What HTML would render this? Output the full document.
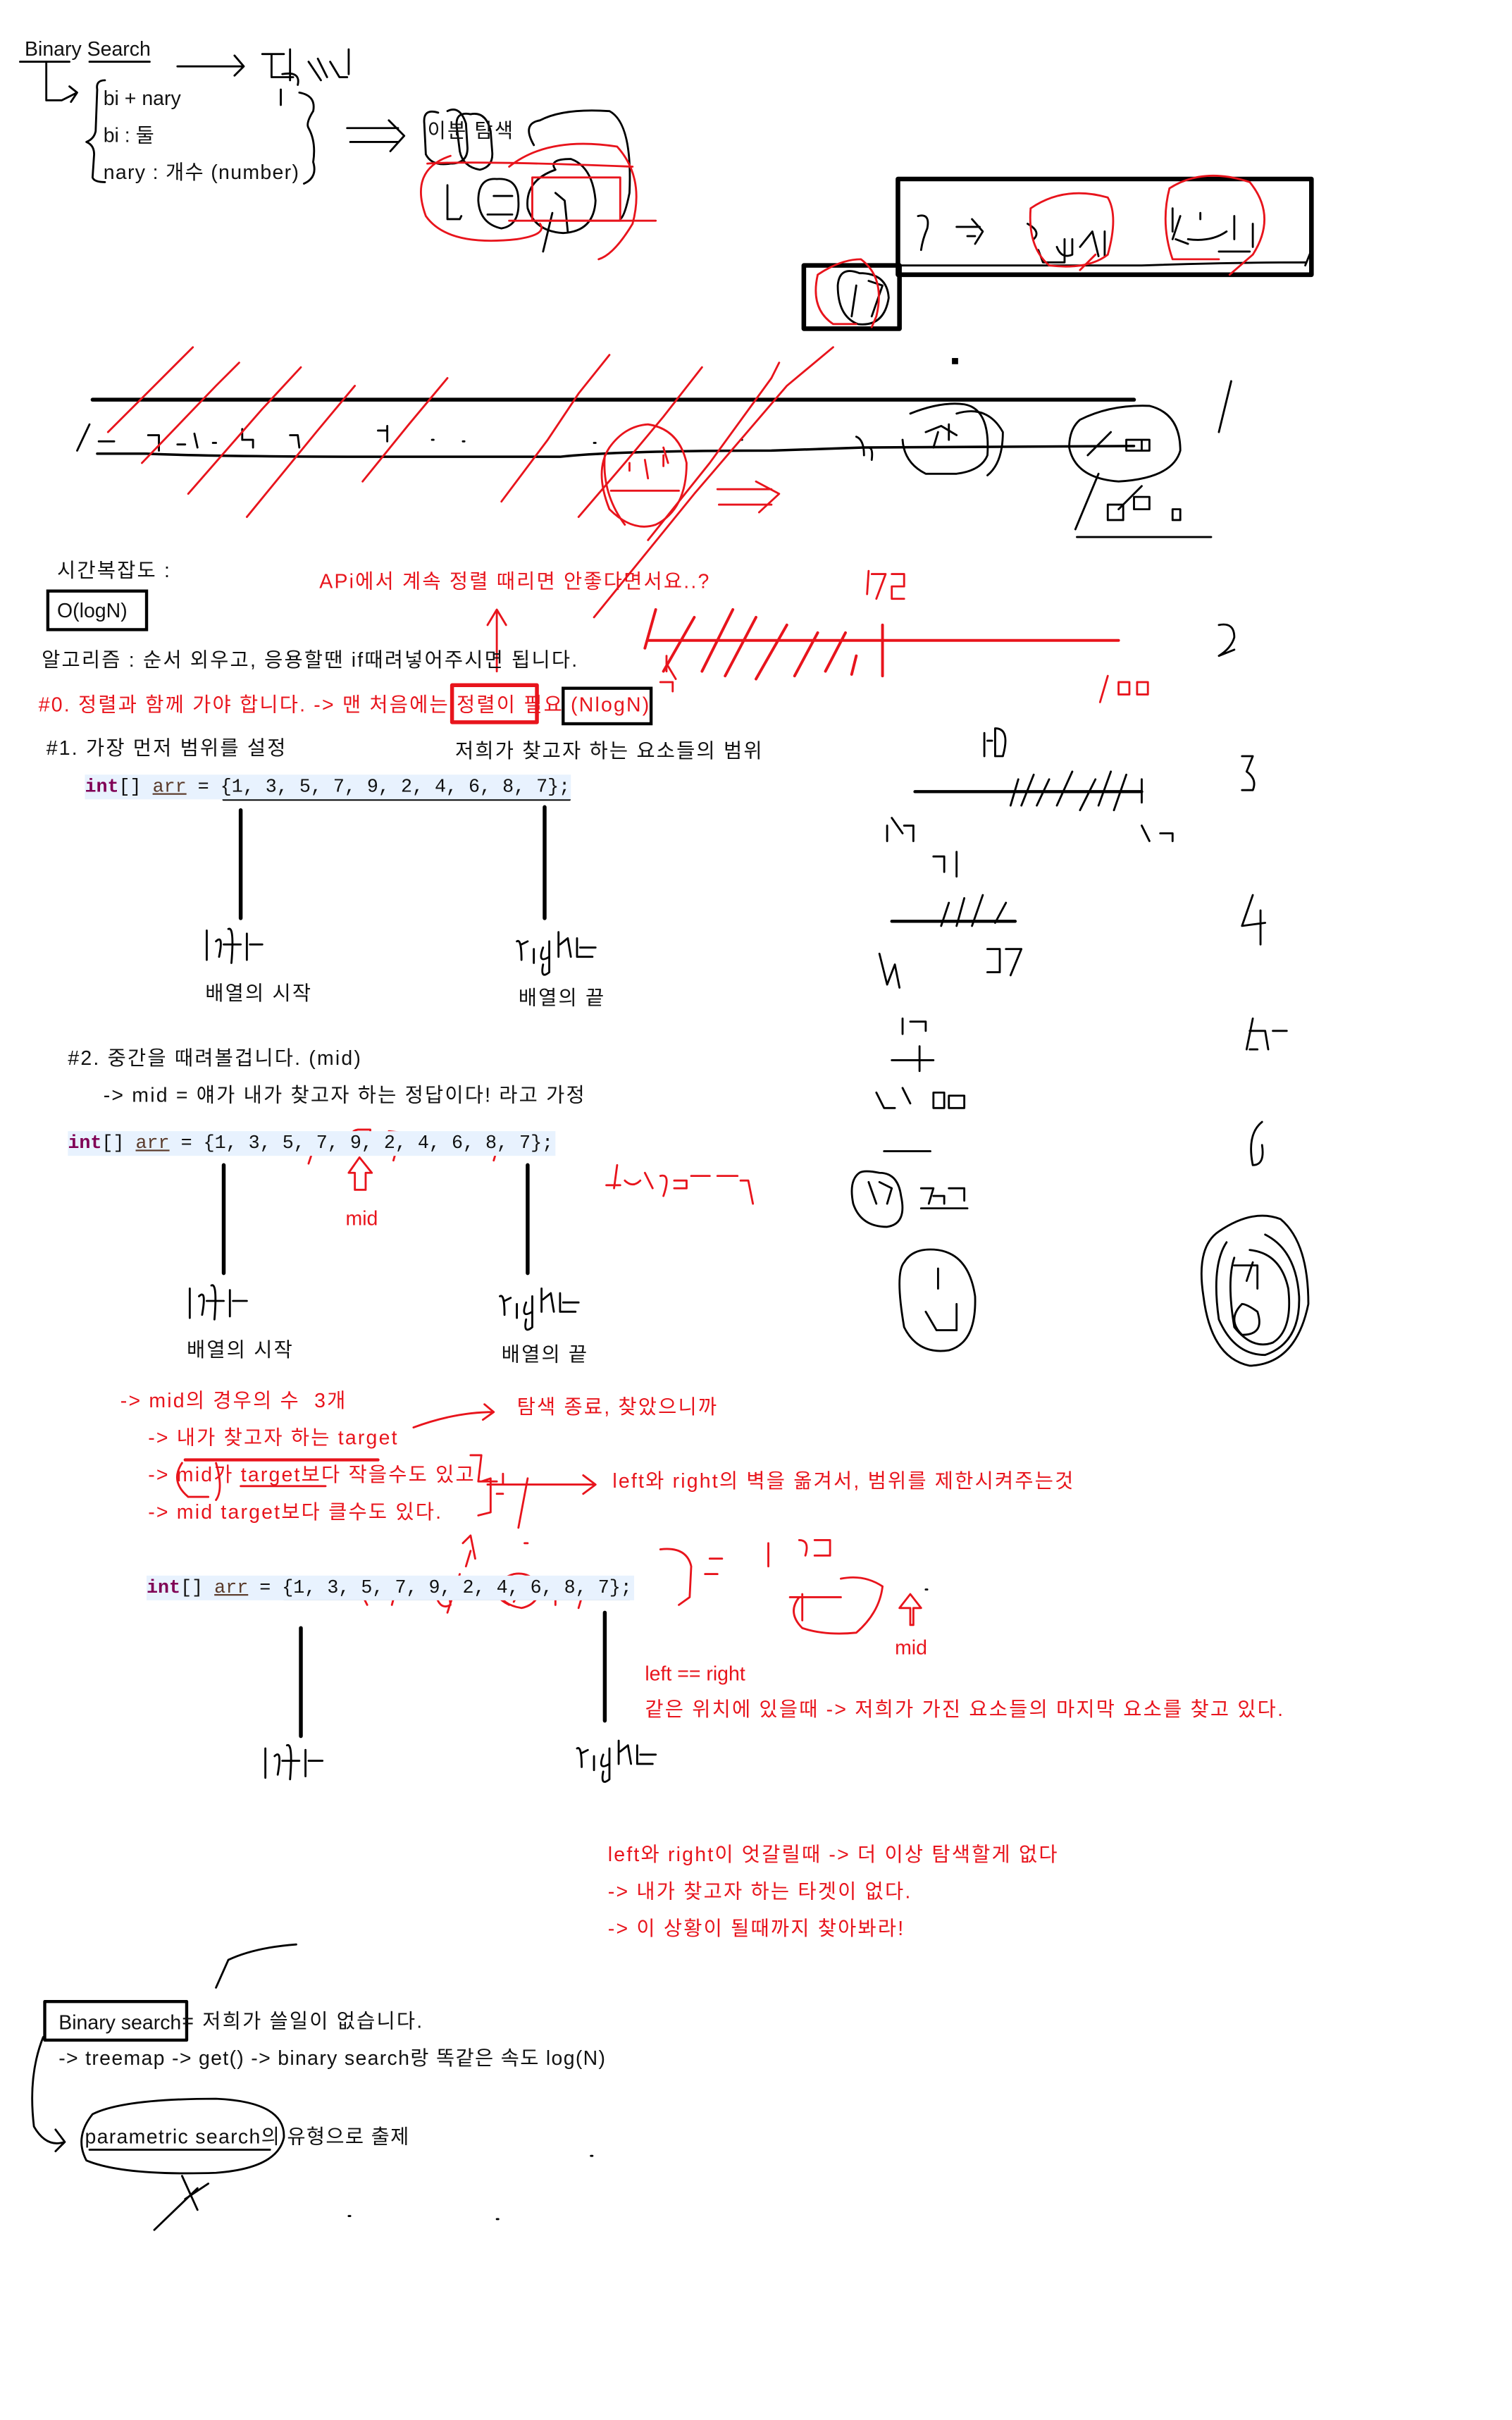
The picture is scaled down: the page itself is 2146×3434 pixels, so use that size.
<!DOCTYPE html>
<html><head><meta charset="utf-8"><style>
html,body{margin:0;padding:0;background:#fff;overflow:hidden;width:2146px;height:3434px}
#w{position:absolute;left:0;top:0;width:980px;height:1568px;transform:scale(2.1898);transform-origin:0 0;font-family:"Liberation Sans","Noto Sans CJK KR",sans-serif;font-size:13px;color:#111}
.t{position:absolute;white-space:nowrap;line-height:16px}
.k{letter-spacing:1px}
.m{letter-spacing:0.6px}
.r{color:#e8141c}
.c{position:absolute;white-space:nowrap;font-family:"Liberation Mono",monospace;font-size:12.2px;line-height:16px;background:#e8f2fe;color:#111}
.c b{color:#7f0055}.c u{color:#5a3a2a}
svg{position:absolute;left:0;top:0}
</style></head><body><div id="w">
<svg width="960" height="1536" viewBox="0 0 960 1536" fill="none" stroke-linecap="round" stroke-linejoin="round">
<g stroke="#000" stroke-width="1.3">
<path d="M13 40H45M58 40H97M30 40V65H40L50 60M45 56L50 60L46 66"/>
<path d="M68 52Q62 52 63 58L62 85Q61 90 56 92Q61 94 61 100L60 115Q61 118 68 118"/>
<path d="M115 43H158M152 36L158 43L152 49"/>
<path d="M170 35H184M176 35V50H190M188 32V52M183 48Q195 46 193 55M182 58V68M200 40L208 52M206 38L212 50M214 40L220 50H225M226 32V48"/>
<path d="M194 60Q205 62 203 72Q198 80 200 83Q205 92 203 105Q206 115 197 119"/>
<path d="M225 83H258M227 92H258M252 78L262 88L253 98"/>
<path d="M284 73Q274 70 275 80L276 100Q280 108 292 106Q303 106 303 96L302 80Q298 68 290 72M305 74Q295 72 296 82L298 98Q300 108 311 110Q320 108 319 98L318 85Q315 72 305 74"/>
<path d="M290 120V142H298L299 140M322 116Q310 115 310 130Q311 145 325 148Q337 146 336 130Q336 115 322 116M360 110Q340 117 342 135Q347 150 365 151Q385 150 386 130Q384 108 370 103Q355 103 360 110M320 127H332M316 139H332M358 138L352 163M360 125L366 130L368 150"/>
<path d="M346 94Q338 80 350 78Q365 70 395 72Q410 80 408 125Q405 140 402 142"/>
<path d="M582 116H850V178H582Z" stroke-width="3"/>
<path d="M521 172H583V213H521Z" stroke-width="3"/>
<path d="M583 172H740Q800 170 846 170M846 172L850 162"/>
<path d="M595 140Q603 138 601 148Q598 155 597 162M620 147H635M627 153H632M630 142L637 150L632 158"/>
<path d="M666 145Q675 150 670 155M673 162L676 170H690V155M685 160Q688 168 695 165V155M700 160L708 150L712 166M716 150V166"/>
<path d="M760 135V150M765 140L760 155M762 155L770 158M778 138V142M770 155Q785 157 795 150M800 140V155M790 163H810M812 145V160"/>
<path d="M557 177Q544 172 543 185Q543 205 556 210Q573 212 576 193Q575 177 557 177M555 185L552 205M563 182L572 185L565 205"/>
<rect x="617" y="232" width="4" height="4" fill="#000" stroke="none"/>
<path d="M60 259H735" stroke-width="2.5"/>
<path d="M63 294H95Q140 296 250 296H363Q400 292 500 292L560 290L735 289" stroke-width="1.6"/>
<path d="M58 275L50 292M64 286H74M96 282H103V292M115 288H120M126 281L128 290M138 287H140M157 278V285H164V290M188 282H193L194 290M245 279H250M251 276V286M280 285H281M300 286H301M385 287H386M480 285H481"/>
<path d="M555 283Q560 285 560 295M563 290Q566 290 565 298M590 268Q610 260 625 262Q642 265 640 295Q636 305 620 307H600Q586 300 585 285M600 280L610 276L620 282M615 275V285M608 280L605 290"/>
<path d="M620 268Q640 262 650 280Q650 300 640 308"/>
<path d="M700 272Q720 262 745 263Q765 268 765 292Q760 310 725 312Q697 310 693 290Q693 278 700 272M705 295L720 280M730 285H745V292H730ZM740 285V292"/>
<path d="M740 315L725 330M712 307L697 343M718 327H728V337H718ZM735 322H745V330H735ZM760 330H765V337H760ZM698 348H785"/>
<path d="M798 247L790 280M790 405Q800 403 800 413Q798 420 790 425L800 421M805 490H812L808 500Q815 505 812 512L805 512M812 580L805 600L820 598M817 590V612M812 660L808 680M810 668H820L822 680M810 680H815M825 668H834M818 727Q808 735 812 755Q820 755 818 742"/>
<path d="M638 475V490M640 480H643M645 472Q655 472 650 490H645Z"/>
<path d="M593 513H740" stroke-width="2"/>
<path d="M660 505L655 522M670 502L662 522M680 505L672 522M695 500L685 522M710 505L700 525M720 500L712 522M730 502L722 525M740 505V520"/>
<path d="M575 535V545M578 530L585 540M586 535H592V545M740 535L745 545M752 540H760V545M605 555H612V565M620 552V568"/>
<path d="M578 597H658" stroke-width="2"/>
<path d="M615 585L610 600M625 582L620 600M637 580L630 600M652 585L645 598M570 618L575 638L580 625L583 640M640 615H648V630H640M652 615H662L655 632"/>
<path d="M585 660V670M590 662H600V668M578 687H605M596 678V694M568 708L573 718H580M585 705L590 715M605 708H612V718H605ZM615 710H625V718H615Z"/>
<path d="M573 746H603M557 760Q550 765 553 780Q558 795 575 795Q588 793 584 775Q582 760 570 760Q560 758 557 760M563 766L568 780M570 766L578 770L575 780M597 770H605L602 780M597 783H627M605 775H612V780M615 770H625V778"/>
<path d="M586 818Q580 825 586 860Q595 878 615 875Q633 870 632 840Q628 813 608 810Q592 808 586 818M608 822V835M600 850L607 862H620V845"/>
<path d="M790 798Q775 808 780 840Q785 880 810 885Q840 884 848 845Q848 805 830 790Q812 783 790 798M795 805Q785 820 790 855Q800 878 820 878Q843 870 842 840Q840 810 820 800M800 815Q795 830 800 860Q812 875 825 870Q838 862 835 835Q830 812 810 810M800 820H815V835M812 818L808 830M805 845Q795 855 805 865Q820 865 815 850Q808 845 805 845"/>
<path d="M156 525V595M353 523V595M145 755V825M342 755V825M195 1055V1125M392 1045V1115" stroke-width="2.5"/>
<path d="M145 518H369M134 748H356M184 1036H408" stroke-width="1.8"/>
<path d="M134 603V622M140 610Q145 605 142 620M148 602Q152 600 150 624M145 612H156M160 605V622M162 612H170"/>
<path d="M335 610Q338 608 338 622M338 612L342 610M346 615V624M352 614Q348 625 356 620M356 610V630Q350 635 352 625M362 604V620M363 612L368 608L370 620M374 608V620H384M376 614H386"/>
<path d="M123 835V854M129 840Q134 835 131 852M137 833Q141 831 139 855M134 843H145M149 836V853M151 843H160"/>
<path d="M324 840Q327 838 327 852M327 843L331 841M335 845V854M341 844Q337 855 345 850M345 840V860Q339 865 341 855M351 835V850M352 842L357 838L359 850M363 838V850H373M365 844H375"/>
<path d="M172 1133V1152M178 1138Q183 1133 180 1150M186 1131Q190 1129 188 1153M183 1141H194M198 1134V1151M200 1141H209"/>
<path d="M374 1133Q377 1131 377 1145M377 1136L381 1134M385 1138V1147M391 1137Q387 1148 395 1143M395 1133V1153Q389 1158 391 1148M401 1128V1143M402 1135L407 1131L409 1143M413 1131V1143H423M415 1137H425"/>
<path d="M29 1297H121V1322H29Z" stroke-width="2"/>
<path d="M140 1288L148 1270Q165 1262 192 1260"/>
<path d="M28 1320Q18 1345 22 1378Q30 1392 42 1388M36 1380L42 1388L36 1394"/>
<path d="M60 1370Q80 1360 140 1360Q185 1362 184 1385Q180 1405 140 1408Q80 1410 56 1400Q48 1385 60 1370M58 1393H175"/>
<path d="M118 1410L128 1432M120 1425L135 1415M100 1445L128 1418M226 1436H227M322 1438H323M383 1397H384M600 1030H601"/>
</g>
<g stroke="#e8141c" stroke-width="1.3">
<path d="M277 106Q308 104 410 108M292 101Q265 110 276 140Q290 160 335 155Q355 152 350 145"/>
<path d="M330 108Q355 88 400 95Q418 115 410 145Q398 165 388 168"/>
<path d="M345 115H402V143H345Z"/>
<path d="M330 143H425"/>
<path d="M668 135Q690 120 718 128Q725 140 718 165Q705 175 680 172Q666 160 668 135M710 165L700 175"/>
<path d="M758 122Q780 108 810 118Q828 140 812 165L797 178M758 122Q752 145 760 168H790"/>
<path d="M530 178Q545 168 558 168Q574 180 568 205L565 212M530 178Q525 200 540 210H555"/>
<path d="M70 280L100 250L125 225M92 300L140 250L155 235M122 320L170 265L195 238M160 335L205 280L230 250M235 312L265 275L290 245M325 325L355 285L375 255L395 230M375 335L405 300L430 270L455 238M420 350L460 300L500 245L505 235M385 400L450 320L510 250L540 225"/>
<path d="M395 290Q385 305 395 330Q410 345 425 340Q445 330 445 300Q440 278 420 275Q405 276 395 290M392 295Q390 320 405 340M408 300V305M418 298L420 310M430 295V302M433 300L430 290M396 318H440"/>
<path d="M465 317H500M466 327H500M490 312L505 320L492 332"/>
<path d="M418 420L425 395M430 435L450 400M455 435L475 395M470 438L490 400M490 440L510 405M515 438L530 410M535 435L548 410M552 437L555 425M420 415H725M572 405V438" stroke-width="1.8"/>
<path d="M432 430L438 440M428 442H436V448M432 425V435"/>
<path d="M563 370L562 385M565 372H574L568 388M578 372H586V380H578V388H586"/>
<path d="M718 438L713 455M725 442V450H732V442ZM737 442V450H744V442Z"/>
<path d="M322 435V397M316 405L322 395L328 405"/>
<path d="M293 444H348V468H293Z" stroke-width="2.5"/>
<path d="M176 741L184 739M182 738L188 745M200 736L206 738M205 739L200 754M204 747L208 742M225 735Q228 745 230 742M230 738Q226 733 232 732H240V744L232 748Q224 748 225 735M246 736L249 748M252 733L260 734L255 752M275 735L278 745M285 735L290 748M302 735L308 748M318 735H325L320 752"/>
<path d="M233 750L226 760H230V771H237V760H241Z"/>
<path d="M398 770L400 755M393 768H402M405 765Q410 770 415 765M418 760L423 770M428 762Q435 760 430 775M437 765H445V770H437M448 762H460M465 762H478M480 765H485L488 780"/>
<path d="M120 946H245" stroke-width="2"/>
<path d="M268 925Q295 915 320 915M314 910L320 915L313 920"/>
<path d="M118 948Q110 960 122 970H135M140 948Q145 965 140 972"/>
<path d="M156 963H211"/>
<path d="M305 943H312L310 960H318L322 960M312 960L318 958V980L310 982M326 955V962M322 968H326M342 958L336 990M340 1000H342"/>
<path d="M316 962H385M378 956L386 962L378 968"/>
<path d="M300 1000L305 995L308 1010M305 1005L302 1015"/>
<path d="M214 1030L220 1028M224 1025L230 1030M232 1028L238 1040M253 1025H258L254 1040M281 1025Q283 1045 292 1040L290 1025H281M298 1020L290 1045M318 1025Q320 1035 330 1040M333 1020Q345 1018 350 1030Q348 1040 338 1042Q325 1040 322 1030Q325 1022 333 1020M340 1025L333 1038M360 1025V1040M370 1025H380L375 1042"/>
<path d="M428 1004Q445 1002 448 1015L447 1035L440 1040M460 1010H468M457 1020H465M498 1000V1015M518 998Q525 998 522 1008M528 998H538V1008H528"/>
<path d="M518 1035Q510 1045 520 1055Q535 1060 555 1058Q570 1045 572 1028M512 1035H545M520 1033V1050M545 1023Q560 1020 572 1028"/>
<path d="M590 1053V1042H583L590 1033L597 1042H592V1053Z"/>
</g>
</svg>

<div class="t" style="left:16px;top:24px">Binary Search</div>
<div class="t" style="left:67px;top:56px">bi + nary</div>
<div class="t" style="left:67px;top:80px">bi : 둘</div>
<div class="t m" style="left:67px;top:104px">nary : 개수 (number)</div>
<div class="t k" style="left:277px;top:77px">이분 탐색</div>

<div class="t k" style="left:37px;top:362px">시간복잡도 :</div>
<div class="t" style="left:30px;top:382px;border:2px solid #000;line-height:24px;padding-left:5px;box-sizing:border-box;width:66px;height:27px">O(logN)</div>
<div class="t r k" style="left:207px;top:369px">APi에서 계속 정렬 때리면 안좋다면서요..?</div>
<div class="t k" style="left:27px;top:420px">알고리즘 : 순서 외우고, 응용할땐 if때려넣어주시면 됩니다.</div>
<div class="t r k" style="left:25px;top:449px">#0. 정렬과 함께 가야 합니다. -&gt; 맨 처음에는 정렬이 필요 (NlogN)</div>
<div style="position:absolute;left:364px;top:445px;width:59px;height:25px;border:2px solid #000;box-sizing:border-box"></div>
<div class="t k" style="left:30px;top:477px">#1. 가장 먼저 범위를 설정</div>
<div class="t k" style="left:295px;top:479px">저희가 찾고자 하는 요소들의 범위</div>
<div class="c" style="left:55px;top:502px;width:315px"><b>int</b>[] <u>arr</u> = {1, 3, 5, 7, 9, 2, 4, 6, 8, 7};</div>
<div class="t k" style="left:133px;top:636px">배열의 시작</div>
<div class="t k" style="left:336px;top:639px">배열의 끝</div>
<div class="t k" style="left:44px;top:678px">#2. 중간을 때려볼겁니다. (mid)</div>
<div class="t k" style="left:67px;top:702px">-&gt; mid = 얘가 내가 찾고자 하는 정답이다! 라고 가정</div>
<div class="c" style="left:44px;top:733px;width:316px"><b>int</b>[] <u>arr</u> = {1, 3, 5, 7, 9, 2, 4, 6, 8, 7};</div>
<div class="t r" style="left:224px;top:782px">mid</div>
<div class="t k" style="left:121px;top:867px">배열의 시작</div>
<div class="t k" style="left:325px;top:870px">배열의 끝</div>
<div class="t r k" style="left:78px;top:900px">-&gt; mid의 경우의 수&nbsp; 3개</div>
<div class="t r k" style="left:96px;top:924px">-&gt; 내가 찾고자 하는 target</div>
<div class="t r k" style="left:96px;top:948px">-&gt; mid가 target보다 작을수도 있고</div>
<div class="t r k" style="left:96px;top:972px">-&gt; mid target보다 클수도 있다.</div>
<div class="t r k" style="left:335px;top:904px">탐색 종료, 찾았으니까</div>
<div class="t r k" style="left:397px;top:952px">left와 right의 벽을 옮겨서, 범위를 제한시켜주는것</div>
<div class="c" style="left:95px;top:1021px;width:316px"><b>int</b>[] <u>arr</u> = {1, 3, 5, 7, 9, 2, 4, 6, 8, 7};</div>
<div class="t r" style="left:580px;top:1060px">mid</div>
<div class="t r" style="left:418px;top:1077px">left == right</div>
<div class="t r k" style="left:418px;top:1100px">같은 위치에 있을때 -&gt; 저희가 가진 요소들의 마지막 요소를 찾고 있다.</div>
<div class="t r k" style="left:394px;top:1194px">left와 right이 엇갈릴때 -&gt; 더 이상 탐색할게 없다</div>
<div class="t r k" style="left:394px;top:1218px">-&gt; 내가 찾고자 하는 타겟이 없다.</div>
<div class="t r k" style="left:394px;top:1242px">-&gt; 이 상황이 될때까지 찾아봐라!</div>
<div class="t" style="left:38px;top:1303px">Binary search</div>
<div class="t k" style="left:118px;top:1302px">= 저희가 쓸일이 없습니다.</div>
<div class="t m" style="left:38px;top:1326px">-&gt; treemap -&gt; get() -&gt; binary search랑 똑같은 속도 log(N)</div>
<div class="t m" style="left:55px;top:1377px">parametric search의 유형으로 출제</div>
</div></body></html>
